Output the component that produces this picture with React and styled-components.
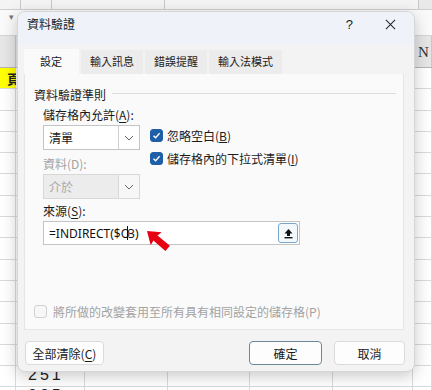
import React from 'react';
import styled, { createGlobalStyle } from 'styled-components';

const GlobalStyle = createGlobalStyle`
  html, body { margin: 0; padding: 0; }
  body {
    font-family: "Noto Sans CJK TC", "Noto Sans", sans-serif;
    background: #ffffff;
  }
`;

const COLS = [16, 69, 83, 82, 83, 80, 19];
const ROWS = 15;

const App = () => {
  return (
    <>
      <GlobalStyle />
      <Screen>
        <Sheet>
          <FormulaBar>
            <FormulaBox $w={20} />
            <FormulaBox $w={30} />
            <FormulaBox $w={112} />
            <FormulaBox $w={253} />
          </FormulaBar>
          <NameRow>
            <NameArrow>▾</NameArrow>
          </NameRow>
          <HeaderRow>
            {COLS.map((w, i) => (
              <HeaderCell key={i} $w={w}>{i === 6 ? 'N' : ''}</HeaderCell>
            ))}
          </HeaderRow>
          {Array.from({ length: ROWS }).map((_, r) => (
            <SheetRow key={r}>
              {COLS.map((w, c) => (
                <Cell key={c} $w={w} $yellow={r === 0 && c === 0} $top={r === 14}>
                  {r === 0 && c === 0 ? <YellowText>頁</YellowText> : ''}
                  {r === 14 && c === 1 ? '251' : ''}
                </Cell>
              ))}
            </SheetRow>
          ))}
          <SheetRow>
            {COLS.map((w, c) => (
              <Cell key={c} $w={w} $top>{c === 1 ? '925' : ''}</Cell>
            ))}
          </SheetRow>
        </Sheet>

        <Dialog>
          <TitleBar>
            <Title>資料驗證</Title>
            <TitleActions>
              <Help>?</Help>
              <CloseIcon viewBox="0 0 12 12">
                <path d="M1 1 L11 11 M11 1 L1 11" stroke="#222" strokeWidth="1.1" fill="none" />
              </CloseIcon>
            </TitleActions>
          </TitleBar>

          <Tabs>
            <Tab $active>設定</Tab>
            <Tab>輸入訊息</Tab>
            <Tab>錯誤提醒</Tab>
            <Tab>輸入法模式</Tab>
          </Tabs>

          <Panel>
            <GroupHeader>
              <span>資料驗證準則</span>
              <GroupLine />
            </GroupHeader>

            <Fields>
              <FieldLabel>儲存格內允許(<u>A</u>):</FieldLabel>
              <ChoiceRow>
                <Select>
                  <SelectValue>清單</SelectValue>
                  <SelectArrow><Chevron /></SelectArrow>
                </Select>
                <Checks>
                  <CheckRow>
                    <CheckBox $checked><CheckMark /></CheckBox>
                    <span>忽略空白(<u>B</u>)</span>
                  </CheckRow>
                  <CheckRow>
                    <CheckBox $checked><CheckMark /></CheckBox>
                    <span>儲存格內的下拉式清單(<u>I</u>)</span>
                  </CheckRow>
                </Checks>
              </ChoiceRow>

              <FieldLabel $disabled $top={6}>資料(D):</FieldLabel>
              <Select $disabled>
                <SelectValue $disabled>介於</SelectValue>
                <SelectArrow $disabled><Chevron /></SelectArrow>
              </Select>

              <FieldLabel $top={4}>來源(<u>S</u>):</FieldLabel>
              <SourceInput>
                <SourceText>=INDIRECT($O<Caret />3)</SourceText>
                <CollapseButton>
                  <svg width="11" height="11" viewBox="0 0 11 11">
                    <path d="M5.5 1 L9.5 5.5 L7 5.5 L7 8 L4 8 L4 5.5 L1.5 5.5 Z" fill="#111" />
                    <rect x="1.5" y="9" width="8" height="1.4" fill="#111" />
                  </svg>
                </CollapseButton>
                <RedArrow width="34" height="32" viewBox="0 0 34 32">
                  <g transform="translate(4 5) rotate(40)">
                    <polygon points="0,0 12,-8.5 11,-3.2 27,-3.5 27,3.5 11,3.2 12,8.5" fill="#e60012" />
                  </g>
                </RedArrow>
              </SourceInput>
            </Fields>

            <ApplyRow>
              <CheckBox />
              <span>將所做的改變套用至所有具有相同設定的儲存格(P)</span>
            </ApplyRow>
          </Panel>

          <Footer>
            <Button $w={79}>全部清除(<u>C</u>)</Button>
            <FooterRight>
              <Button $w={73} $primary>確定</Button>
              <Button $w={71}>取消</Button>
            </FooterRight>
          </Footer>
        </Dialog>
      </Screen>
    </>
  );
};

export default App;

const Chevron = () => (
  <svg width="10" height="6" viewBox="0 0 10 6">
    <path d="M1 1 L5 5 L9 1" stroke="#666" strokeWidth="1" fill="none" />
  </svg>
);

const CheckMark = () => (
  <svg width="9" height="9" viewBox="0 0 9 9">
    <path d="M1.5 4.8 L3.6 6.8 L7.6 2.2" stroke="#fff" strokeWidth="1.3" fill="none" />
  </svg>
);

// Styled Components
const Screen = styled.div`
  position: relative;
  width: 432px;
  height: 390px;
  overflow: hidden;
`;

const Sheet = styled.div`
  display: flex;
  flex-direction: column;
  width: 432px;
  height: 390px;
  overflow: hidden;
  background: #ffffff;
  font-family: "Liberation Serif", serif;

  & > * {
    flex: none;
  }
`;

const FormulaBar = styled.div`
  display: flex;
  height: 9px;
  background: #e9e9e9;
  border-bottom: 1px solid #cfcfcf;
`;

const FormulaBox = styled.div`
  width: ${({ $w }) => $w}px;
  border-right: 1px solid #c9c9c9;
  background: #f4f4f4;
`;

const NameRow = styled.div`
  height: 25px;
  background: #fafafa;
  border-bottom: 1px solid #d4d4d4;
  position: relative;
`;

const NameArrow = styled.span`
  position: absolute;
  left: 9px;
  top: 2px;
  font-size: 9px;
  color: #777;
`;

const HeaderRow = styled.div`
  display: flex;
  height: 31px;
  background: #e6e6e6;
  border-bottom: 1px solid #b5b5b5;
`;

const HeaderCell = styled.div`
  width: ${({ $w }) => $w}px;
  flex: none;
  box-sizing: border-box;
  border-right: 1px solid #c8c8c8;
  display: flex;
  align-items: flex-end;
  padding: 0 0 6px 5px;
  font-size: 15px;
  color: #333;
`;

const SheetRow = styled.div`
  display: flex;
  height: 21.3px;
`;

const Cell = styled.div`
  width: ${({ $w }) => $w}px;
  flex: none;
  box-sizing: border-box;
  border-right: 1px solid #dadada;
  border-bottom: 1px solid #dadada;
  background: ${({ $yellow }) => ($yellow ? '#ffff00' : '#ffffff')};
  font-family: "Liberation Sans", sans-serif;
  font-size: 16px;
  letter-spacing: 3px;
  color: #222;
  display: flex;
  align-items: ${({ $top }) => ($top ? 'flex-start' : 'center')};
  justify-content: ${({ $yellow }) => ($yellow ? 'flex-end' : 'flex-start')};
  padding-left: 12px;
  overflow: ${({ $yellow }) => ($yellow ? 'visible' : 'hidden')};
  white-space: nowrap;
`;

const YellowText = styled.span`
  font-family: "Noto Sans CJK TC", sans-serif;
  font-size: 13px;
  font-weight: 700;
  letter-spacing: 0;
  margin-right: -5px;
`;

const Dialog = styled.div`
  position: absolute;
  left: 17px;
  top: 11px;
  width: 398px;
  height: 361px;
  box-sizing: border-box;
  display: flex;
  flex-direction: column;
  background: #f3f3f3;
  border: 1px solid #d6d6d6;
  border-radius: 8px;
  box-shadow: 0 4px 16px rgba(0, 0, 0, 0.22);
  overflow: hidden;
  font-family: "Noto Sans CJK TC", "Noto Sans", sans-serif;
  font-size: 12px;
  color: #1b1b1b;
`;

const TitleBar = styled.div`
  display: flex;
  align-items: flex-start;
  justify-content: space-between;
  height: 33px;
  box-sizing: border-box;
  padding: 4px 18px 0 9px;
  background: #eff3f9;
  flex: none;
`;

const Title = styled.div`
  font-size: 12px;
  line-height: 16px;
`;

const TitleActions = styled.div`
  display: flex;
  align-items: center;
  gap: 32px;
  height: 16px;
`;

const Help = styled.span`
  font-family: "Liberation Sans", sans-serif;
  font-size: 13px;
  color: #222;
`;

const CloseIcon = styled.svg`
  width: 11px;
  height: 11px;
`;

const Tabs = styled.div`
  display: flex;
  gap: 2px;
  margin: 4px 0 0 6px;
  height: 25px;
  flex: none;
`;

const Tab = styled.div`
  display: flex;
  align-items: center;
  padding: 0 ${({ $active }) => ($active ? '17px 0 16px' : '9px')};
  background: ${({ $active }) => ($active ? '#fafafa' : '#ececec')};
  margin-top: ${({ $active }) => ($active ? '0' : '1px')};
  font-size: 11px;
  color: #1b1b1b;
  padding-bottom: 2px;
`;

const Panel = styled.div`
  display: flex;
  flex-direction: column;
  margin: 0 10px 0 6px;
  height: 256px;
  flex: none;
  box-sizing: border-box;
  background: #fafafa;
  border: 1px solid #e6e6e6;
  border-top: none;
  padding: 12px 0 0 9px;
`;

const GroupHeader = styled.div`
  display: flex;
  align-items: center;
  gap: 6px;
  height: 16px;
  padding-right: 7px;
  font-size: 12px;
`;

const GroupLine = styled.div`
  flex: 1;
  height: 1px;
  background: #dedede;
  margin-top: -2px;
`;

const Fields = styled.div`
  display: flex;
  flex-direction: column;
  padding-left: 9px;
  margin-top: 5px;
`;

const FieldLabel = styled.div`
  font-size: 12px;
  height: 16px;
  line-height: 16px;
  margin-top: ${({ $top }) => $top || 0}px;
  margin-bottom: 2px;
  color: ${({ $disabled }) => ($disabled ? '#a3a3a3' : '#1b1b1b')};

  u {
    text-underline-offset: 2px;
  }
`;

const ChoiceRow = styled.div`
  display: flex;
  align-items: flex-start;
  gap: 10px;
  height: 25px;
  overflow: visible;
`;

const Select = styled.div`
  display: flex;
  width: 97px;
  height: 25px;
  flex: none;
  box-sizing: border-box;
  border: 1px solid ${({ $disabled }) => ($disabled ? '#d8d8d8' : '#c4c4c4')};
  background: ${({ $disabled }) => ($disabled ? '#ececec' : '#ffffff')};
`;

const SelectValue = styled.div`
  flex: 1;
  display: flex;
  align-items: center;
  padding-left: 5px;
  font-size: 12px;
  color: ${({ $disabled }) => ($disabled ? '#a8a8a8' : '#1b1b1b')};
`;

const SelectArrow = styled.div`
  width: 20px;
  display: flex;
  align-items: center;
  justify-content: center;
  border-left: 1px solid ${({ $disabled }) => ($disabled ? '#d8d8d8' : '#d0d0d0')};
  background: ${({ $disabled }) => ($disabled ? '#f7f7f7' : '#ffffff')};
`;

const Checks = styled.div`
  display: flex;
  flex-direction: column;
  gap: 7px;
  padding-top: 2px;
`;

const CheckRow = styled.div`
  display: flex;
  align-items: center;
  gap: 4px;
  height: 16px;
  font-size: 12px;
  white-space: nowrap;
`;

const CheckBox = styled.div`
  width: 13px;
  height: 13px;
  flex: none;
  box-sizing: border-box;
  border-radius: 3px;
  display: flex;
  align-items: center;
  justify-content: center;
  background: ${({ $checked }) => ($checked ? '#1f5fa8' : '#f7f7f7')};
  border: 1px solid ${({ $checked }) => ($checked ? '#1f5fa8' : '#d2d2d2')};
`;

const SourceInput = styled.div`
  position: relative;
  display: flex;
  align-items: center;
  justify-content: space-between;
  width: 257px;
  height: 24px;
  box-sizing: border-box;
  border: 1px solid #c4c4c4;
  background: #ffffff;
  padding: 0 1px 0 5px;
`;

const SourceText = styled.div`
  font-family: "Noto Sans", "Liberation Sans", sans-serif;
  font-size: 12px;
  color: #111;
  display: flex;
  align-items: center;
`;

const Caret = styled.span`
  display: inline-block;
  width: 1px;
  height: 14px;
  background: #111;
  margin: 0 0 0 -3px;
`;

const CollapseButton = styled.div`
  width: 20px;
  height: 20px;
  box-sizing: border-box;
  display: flex;
  align-items: center;
  justify-content: center;
  border: 1px solid #7aa6cc;
  border-radius: 3px;
  background: #f3f8fd;
`;

const RedArrow = styled.svg`
  position: absolute;
  left: 99px;
  top: 4px;
`;

const ApplyRow = styled.div`
  display: flex;
  align-items: center;
  gap: 6px;
  margin-top: auto;
  margin-bottom: 9px;
  font-size: 12px;
  color: #a3a3a3;
  white-space: nowrap;
`;

const Footer = styled.div`
  display: flex;
  justify-content: space-between;
  align-items: center;
  padding: 11px 9px 0 7px;
`;

const FooterRight = styled.div`
  display: flex;
  gap: 12px;
`;

const Button = styled.div`
  width: ${({ $w }) => $w}px;
  height: 24px;
  box-sizing: border-box;
  display: flex;
  align-items: center;
  justify-content: center;
  background: #fdfdfd;
  border: 1px solid ${({ $primary }) => ($primary ? '#6b8797' : '#dadada')};
  border-radius: 4px;
  font-size: 12px;
  color: #1b1b1b;

  u {
    text-underline-offset: 2px;
  }
`;
